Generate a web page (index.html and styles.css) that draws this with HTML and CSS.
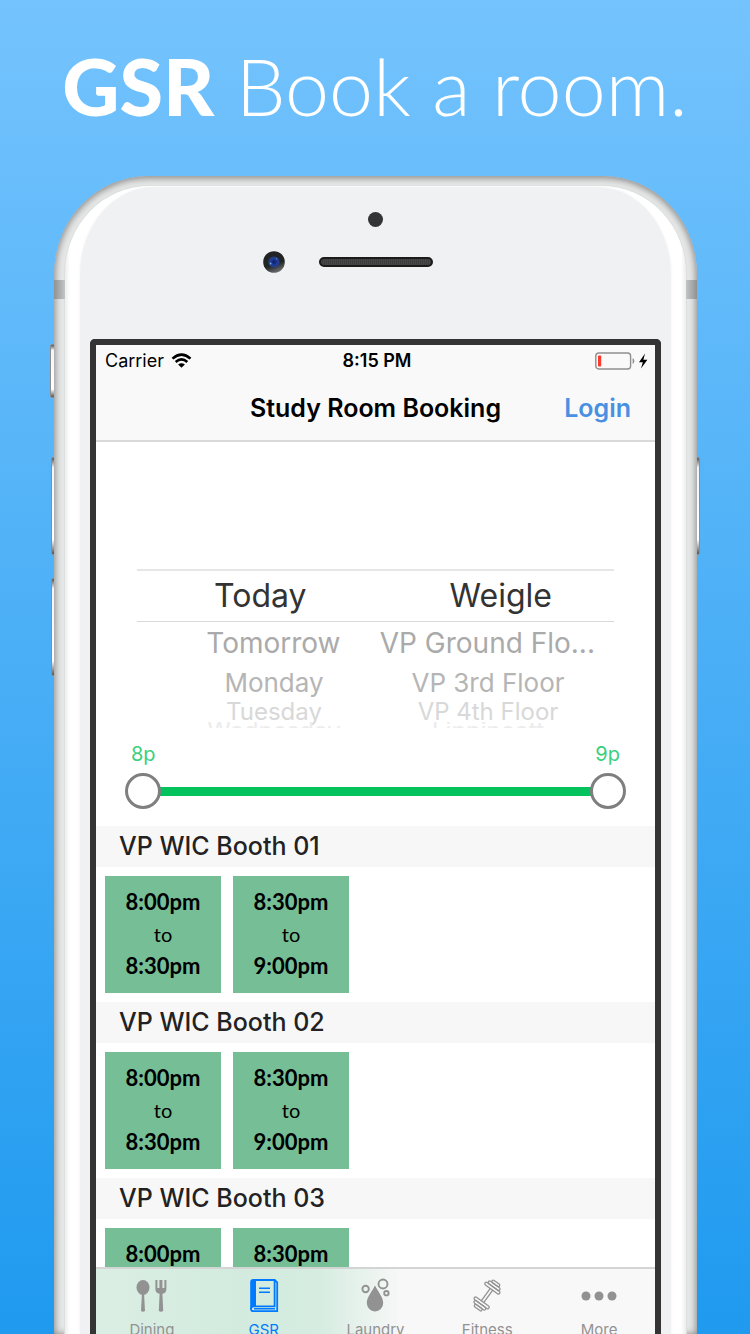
FILE: index.html
```html
<!DOCTYPE html>
<html lang="en">
<head>
<meta charset="utf-8">
<meta name="viewport" content="width=device-width, initial-scale=1">
<title>GSR Book a room.</title>
<link rel="stylesheet" href="styles.css">
</head>
<body>
<main class="poster">
  <h1 class="headline"><strong>GSR</strong> Book a room.</h1>
  <div class="phone">
    <span class="side-button mute"></span>
    <span class="side-button volume-up"></span>
    <span class="side-button volume-down"></span>
    <span class="side-button power"></span>
    <div class="metal">
      <span class="antenna antenna-left"></span>
      <span class="antenna antenna-right"></span>
      <div class="rim">
        <div class="face">
          <div class="sensors">
            <span class="proximity"></span>
            <svg class="camera" viewBox="0 0 22 22" aria-hidden="true">
              <defs>
                <linearGradient id="ring" x1="0.3" y1="0" x2="0.7" y2="1"><stop offset="0.6" stop-color="#222325"/><stop offset="1" stop-color="#77787a"/></linearGradient>
                <radialGradient id="lens"><stop offset="0" stop-color="#0b1a63"/><stop offset="0.5" stop-color="#1c3a94"/><stop offset="1" stop-color="#253f87"/></radialGradient>
              </defs>
              <circle cx="11" cy="11" r="10.8" fill="url(#ring)"/>
              <circle cx="11" cy="11" r="5.6" fill="url(#lens)"/>
              <circle cx="7.6" cy="12.4" r="1" fill="#6f9fd8"/>
              <circle cx="13.6" cy="7.8" r="0.8" fill="#4f7fd0"/>
            </svg>
            <span class="speaker"></span>
          </div>
          <div class="screen">
            <header class="top">
              <div class="status">
                <span class="carrier">Carrier
                  <svg class="wifi" viewBox="0 0 22 16" aria-hidden="true"><g fill="none" stroke="#000" stroke-width="2.8"><path d="M1.4 6Q11 -2.6 20.6 6"/><path d="M4.8 9.6Q11 4.2 17.2 9.6"/></g><path d="M7.4 12.2Q11 9.4 14.6 12.2L11 15.8Z"/></svg>
                </span>
                <time class="clock">8:15 PM</time>
                <svg class="battery" viewBox="0 0 54 18" aria-hidden="true"><rect x="0.8" y="1" width="34.8" height="16" rx="3" fill="none" stroke="#8e8e8e" stroke-width="1.4"/><rect x="3" y="3.4" width="3.2" height="11.2" rx="0.8" fill="#ff3b30"/><path d="M37.6 6v6q1.8-1 1.8-3t-1.8-3z" fill="#8e8e8e"/><path d="M50 1.6 44 10.2h3.8L46 16.6l6.4-8.8h-4z"/></svg>
              </div>
              <div class="nav">
                <h2 class="nav-title">Study Room Booking</h2>
                <a class="login" href="#login">Login</a>
              </div>
            </header>
            <section class="picker" aria-label="Date and location">
              <div class="picker-row selected"><span>Today</span><span>Weigle</span></div>
              <div class="picker-row near"><span>Tomorrow</span><span>VP Ground Flo...</span></div>
              <div class="picker-row mid"><span>Monday</span><span>VP 3rd Floor</span></div>
              <div class="picker-row far"><span>Tuesday</span><span>VP 4th Floor</span></div>
              <div class="picker-row edge"><span>Wednesday</span><span>Lippincott</span></div>
            </section>
            <section class="hours">
              <div class="hour-labels"><label for="start">8p</label><label for="end">9p</label></div>
              <div class="slider">
                <input id="start" type="range" min="0" max="100" value="0">
                <input id="end" type="range" min="0" max="100" value="100">
              </div>
            </section>
            <div class="rooms">
              <section class="room">
                <h3 class="room-name">VP WIC Booth 01</h3>
                <div class="slots">
                  <button class="slot" type="button"><b>8:00pm</b><span>to</span><b>8:30pm</b></button>
                  <button class="slot" type="button"><b>8:30pm</b><span>to</span><b>9:00pm</b></button>
                </div>
              </section>
              <section class="room">
                <h3 class="room-name">VP WIC Booth 02</h3>
                <div class="slots">
                  <button class="slot" type="button"><b>8:00pm</b><span>to</span><b>8:30pm</b></button>
                  <button class="slot" type="button"><b>8:30pm</b><span>to</span><b>9:00pm</b></button>
                </div>
              </section>
              <section class="room">
                <h3 class="room-name">VP WIC Booth 03</h3>
                <div class="slots">
                  <button class="slot" type="button"><b>8:00pm</b><span>to</span><b>8:30pm</b></button>
                  <button class="slot" type="button"><b>8:30pm</b><span>to</span><b>9:00pm</b></button>
                </div>
              </section>
            </div>
            <nav class="tabs">
              <a class="tab" href="#dining">
                <svg viewBox="0 0 36 36" aria-hidden="true"><g fill="currentColor"><ellipse cx="9" cy="9.5" rx="6.5" ry="7.5"/><path d="M8 15h2l1 18q-2 1.400-4 0z"/><path d="M21.400 2h2v8h2V2h3v8h2V2h2v9q0 4-4 4.800L29.200 33q-2.200 1.400-4.400 0L25.600 15.800q-4.200-.8-4.200-4.800z"/></g></svg>
                <span>Dining</span>
              </a>
              <a class="tab active" href="#gsr" aria-current="page">
                <svg viewBox="0 0 36 36" aria-hidden="true"><g fill="none" stroke="currentColor" stroke-width="1.8"><path d="M7 2H28.600V28.400H7.400Q5 28.800 5 31T7.400 33.200H31.200V4.400L28.600 2"/><path d="M29 30.800H8M13 10.200h11M13 14.200h11" stroke-width="1.6"/></g><path fill="currentColor" d="M4.200 4q0-3 3-3H10v27.600Q5.400 28.800 5 31l-.8 0z"/></svg>
                <span>GSR</span>
              </a>
              <a class="tab" href="#laundry">
                <svg viewBox="0 0 36 36" aria-hidden="true"><path fill="currentColor" d="M18 7.500C14.500 14 9.800 19.500 9.800 25a8.200 8.400 0 0 0 16.400 0C26.200 19.500 21.500 14 18 7.500z"/><g fill="none" stroke="currentColor" stroke-width="1.9"><circle cx="8.600" cy="11" r="3.200"/><circle cx="26" cy="6" r="4.500"/><circle cx="29.400" cy="15.200" r="2.200"/></g></svg>
                <span>Laundry</span>
              </a>
              <a class="tab" href="#fitness">
                <svg viewBox="0 0 36 36" aria-hidden="true"><g transform="rotate(-54 18 17.500)" fill="none" stroke="currentColor" stroke-width="1.300"><path d="M10 16h16M10 19h16"/><rect x="7.400" y="8.500" width="3" height="18" rx="1.500"/><rect x="4.400" y="10.500" width="3" height="14" rx="1.500"/><rect x="1.600" y="13" width="2.800" height="9" rx="1.400"/><rect x="25.600" y="8.500" width="3" height="18" rx="1.500"/><rect x="28.600" y="10.500" width="3" height="14" rx="1.500"/><rect x="31.600" y="13" width="2.800" height="9" rx="1.400"/></g></svg>
                <span>Fitness</span>
              </a>
              <a class="tab" href="#more">
                <svg viewBox="0 0 36 36" aria-hidden="true"><g fill="currentColor"><circle cx="5" cy="18" r="4.500"/><circle cx="18" cy="18" r="4.500"/><circle cx="31" cy="18" r="4.500"/></g></svg>
                <span>More</span>
              </a>
            </nav>
          </div>
        </div>
      </div>
    </div>
  </div>
</main>
</body>
</html>
```
FILE: styles.css
```css
* { box-sizing: border-box; }

body {
  margin: 0;
  font-family: Inter, "Liberation Sans", sans-serif;
  color: #000;
}

.poster {
  display: flex;
  flex-direction: column;
  height: 100vh;
  overflow: hidden;
  background: linear-gradient(#74c3fd, #1f9aef);
}

.headline {
  margin: 0;
  padding: 36px 0 40px;
  text-align: center;
  font: 300 79px/100px Lato, sans-serif;
  color: #fff;
  white-space: nowrap;
}
.headline strong { font-weight: 900; }

.phone {
  position: relative;
  flex: 1;
  min-height: 0;
  display: flex;
  margin: 0 53px 0 54px;
}

.side-button {
  position: absolute;
  width: 7px;
  height: 98px;
  border: 1px solid #8d8d8d;
  border-radius: 2px;
  background: linear-gradient(#555, #f4f4f4 10%, #fff 85%, #555);
}
.mute { left: -4px; top: 168px; height: 54px; }
.volume-up { left: -3px; top: 281px; }
.volume-down { left: -3px; top: 402px; }
.power { right: -3px; top: 281px; }

.metal {
  position: relative;
  flex: 1;
  display: flex;
  padding: 10px 11px 0;
  border-radius: 94px 94px 0 0 / 98px 98px 0 0;
  background: #e6e7e7;
  box-shadow: inset 0 1px 7px 1px #858585;
  overflow: hidden;
}

.antenna {
  position: absolute;
  top: 104px;
  width: 11px;
  height: 19px;
}
.antenna-left { left: 0; background: linear-gradient(90deg, #909192, #c4c5c6); }
.antenna-right { right: 0; background: linear-gradient(270deg, #909192, #c4c5c6); }

.rim {
  flex: 1;
  display: flex;
  padding: 1px 15px 0;
  border-radius: 84px 84px 0 0 / 88px 88px 0 0;
  background: linear-gradient(90deg, #eceded, #fff 5px, #fff calc(100% - 5px), #eceded);
  box-shadow: 0 0 1px 1px #dcdddd;
}

.face {
  flex: 1;
  min-width: 0;
  display: flex;
  flex-direction: column;
  padding: 0 10px;
  border-radius: 74px 74px 0 0 / 88px 88px 0 0;
  background: #eff1f3;
  box-shadow: 0 0 3px #eff1f3;
}

.sensors {
  display: grid;
  grid-template-columns: 1fr auto 1fr;
  grid-template-rows: 15px 22px;
  gap: 24px 34px;
  align-items: center;
  padding: 25px 0 66px;
}
.proximity {
  grid-column: 2;
  justify-self: center;
  width: 15px;
  height: 15px;
  border-radius: 50%;
  background: #333436;
}
.camera { grid-column: 1; justify-self: end; width: 22px; height: 22px; }
.speaker {
  width: 114px;
  height: 10px;
  border: 2px solid #1b1b1b;
  border-radius: 5px;
  background: repeating-linear-gradient(90deg, #484848 0 1px, #3c3c3c 1px 2px);
}

.screen {
  flex: 1;
  min-height: 0;
  display: flex;
  flex-direction: column;
  border: 6px solid #343434;
  border-bottom: 0;
  border-radius: 5px 5px 0 0;
  background: #fff;
}

.top {
  border-bottom: 2px solid #d9d9d9;
  background: #f9f9f9;
}
.status {
  display: grid;
  grid-template-columns: 1fr auto 1fr;
  align-items: center;
  padding: 0 6px 0 9px;
  font-size: 18px;
  line-height: 31px;
}
.carrier { display: flex; align-items: center; gap: 7px; }
.wifi { width: 21px; height: 15px; }
.clock { font-weight: 600; }
.battery { justify-self: end; width: 54px; height: 18px; }

.nav {
  display: grid;
  grid-template-columns: 1fr auto 1fr;
  align-items: center;
  padding: 0 24px;
  line-height: 64px;
}
.nav-title { grid-column: 2; margin: 0; font-size: 25px; font-weight: 600; }
.login {
  justify-self: end;
  font-size: 25px;
  font-weight: 600;
  color: #4a90e2;
  text-decoration: none;
}

.picker { padding: 127px 41px 0; }
.picker-row {
  display: grid;
  grid-template-columns: 1fr 1fr;
  padding: 0 19px 0 30px;
  text-align: center;
  white-space: nowrap;
}
.selected {
  gap: 14px;
  padding: 0 0 0 10px;
  border-top: 2px solid #e6e6e6;
  border-bottom: 1px solid #d9d9d9;
  font-size: 32px;
  line-height: 50px;
  color: #333;
}
.near { font-size: 28px; line-height: 42px; color: #aaa; }
.mid { font-size: 26px; line-height: 38px; color: #b5b5b5; }
.far { font-size: 24px; line-height: 20px; color: #d8d8d8; }
.edge { height: 6px; overflow: hidden; font-size: 24px; line-height: 18px; color: #ececec; }

.hours { padding: 12px 29px 17px; }
.hour-labels {
  display: flex;
  justify-content: space-between;
  padding: 0 6px;
  font-size: 20px;
  line-height: 28px;
  color: #3bcf7c;
}
.slider {
  display: grid;
  margin-top: 5px;
  background: linear-gradient(#04c25c, #04c25c) center / calc(100% - 36px) 9px no-repeat;
}
.slider input {
  grid-area: 1 / 1;
  appearance: none;
  width: 100%;
  height: 36px;
  margin: 0;
  background: none;
  pointer-events: none;
}
.slider input::-webkit-slider-thumb {
  appearance: none;
  width: 36px;
  height: 36px;
  border: 3px solid #7f7f7f;
  border-radius: 50%;
  background: #fff;
  pointer-events: auto;
}

.rooms { flex: 1; min-height: 0; overflow: hidden; }
.room-name {
  margin: 0;
  padding: 0 23px;
  background: #f7f7f7;
  font-size: 25px;
  font-weight: 500;
  line-height: 41px;
  color: #222;
}
.slots { display: flex; gap: 12px; padding: 9px; }
.slot {
  display: flex;
  flex-direction: column;
  align-items: center;
  width: 116px;
  padding: 10px 0 11px;
  border: 0;
  background: #76be96;
  font: 400 20px/32px Lato, sans-serif;
  color: #000;
}
.slot b { font-size: 22px; font-weight: 700; }

.tabs {
  display: grid;
  grid-template-columns: repeat(5, 1fr);
  height: 98px;
  margin-bottom: -31px;
  border-top: 2px solid #d3d5d4;
  background: linear-gradient(90deg, #dbeee4, #d3ebde 25%, #d6ece1 40%, #f8f8f8 55%);
}
.tab {
  display: flex;
  flex-direction: column;
  align-items: center;
  padding-top: 9px;
  gap: 8px;
  font-size: 15px;
  line-height: 16px;
  color: #929292;
  text-decoration: none;
}
.tab svg { width: 36px; height: 36px; }
.tab.active { color: #007aff; }
```
